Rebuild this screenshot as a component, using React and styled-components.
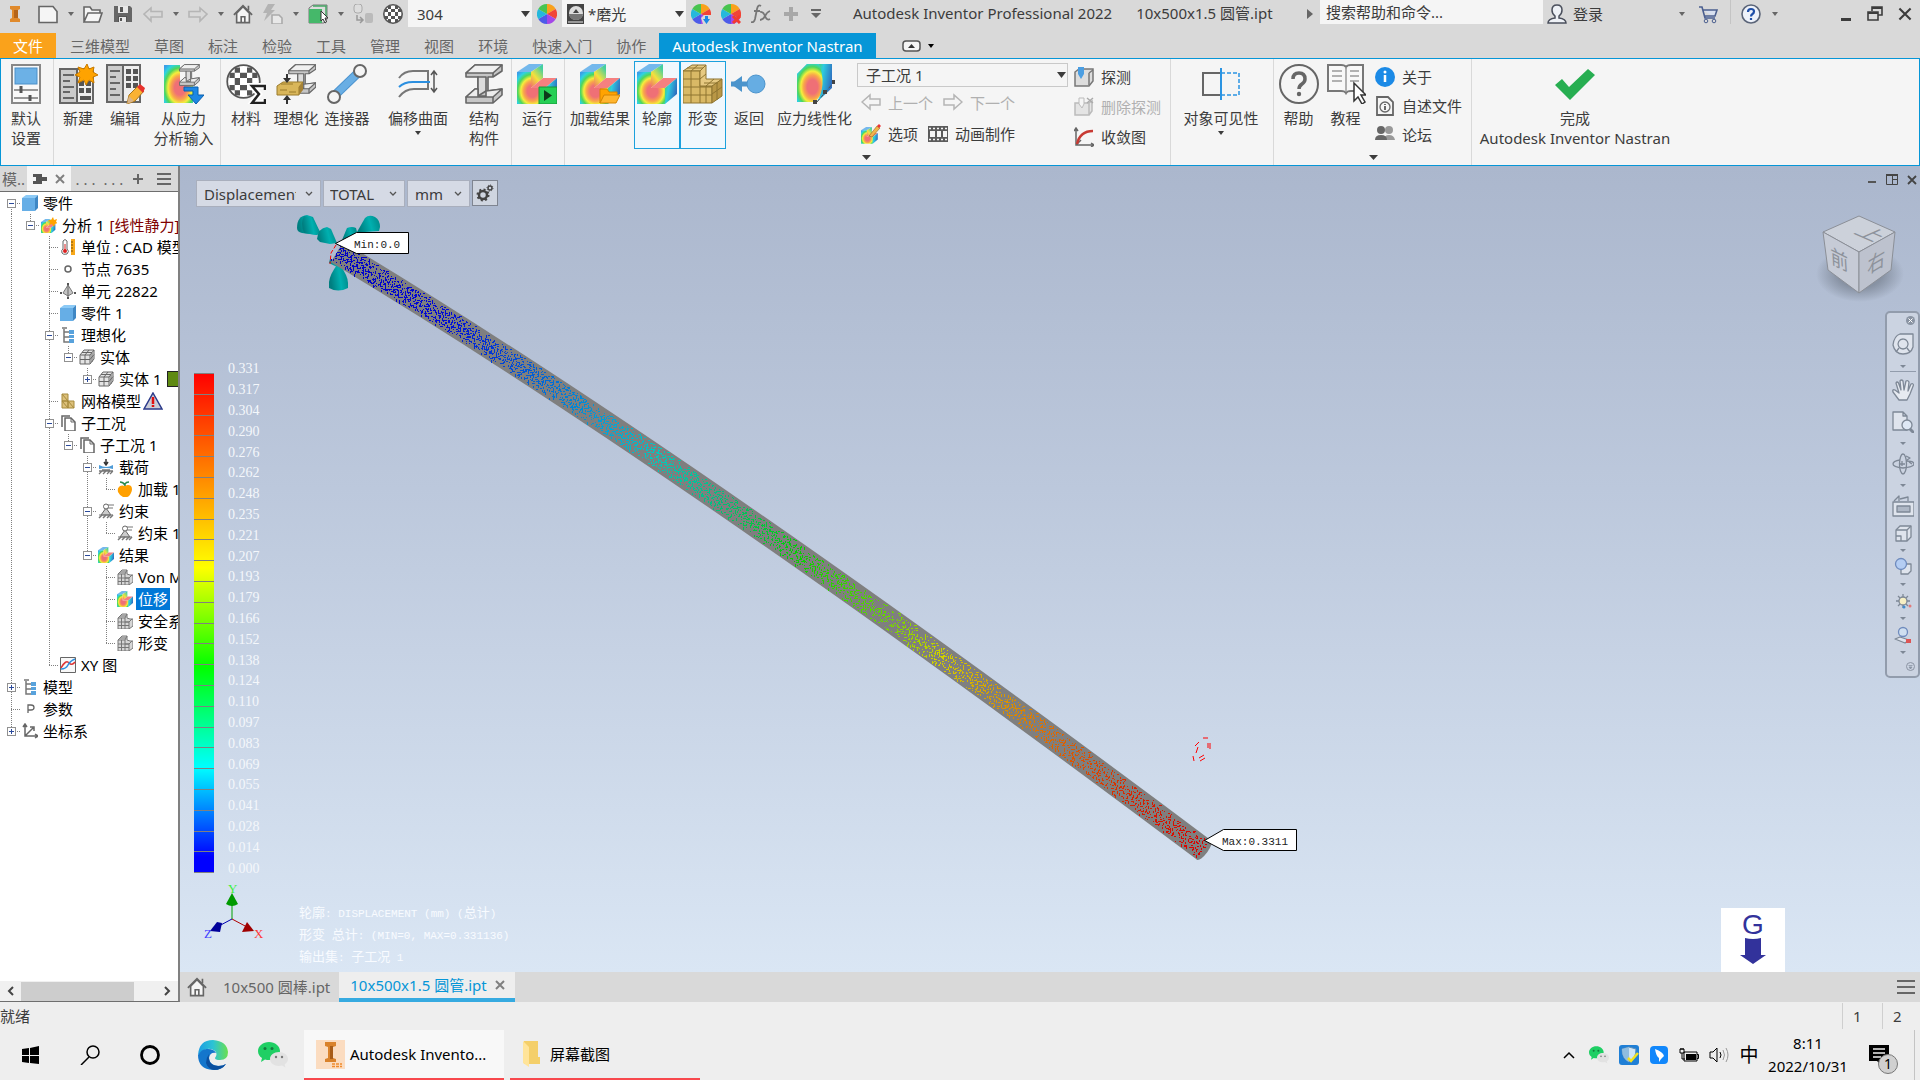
import React, { useState } from 'react'
import styled, { createGlobalStyle, css } from 'styled-components'

const GlobalStyle = createGlobalStyle`
  * {
    box-sizing: border-box;
  }
  body {
    margin: 0;
    background: #eee;
    color: #3c3c3c;
    font-family: 'Noto Sans', 'Noto Sans CJK SC', sans-serif;
    font-size: 15px;
    line-height: 20px;
    overflow: hidden;
  }
  button, select, input {
    margin: 0;
    padding: 0;
    border: 0;
    border-radius: 0;
    background: none;
    color: inherit;
    font: inherit;
    outline: none;
  }
  svg {
    display: block;
    flex: none;
  }
`

/* ---------- layout ---------- */

const Window = styled.div`
  display: flex;
  flex-direction: column;
  height: 100vh;
  white-space: nowrap;
`
const TitleBar = styled.header`
  display: flex;
  height: 33px;
  background: #d9d9d9;
`
const ToolButton = styled.button`
  display: flex;
  align-items: center;
  justify-content: center;
  width: ${(p) => p.$w || 30}px;
  height: 27px;
`
const TitleText = styled.div`
  display: flex;
  gap: 24px;
  margin-left: 27px;
  line-height: 27px;
`
const RightTools = styled.div`
  display: flex;
  margin-left: auto;
`
const SearchInput = styled.input`
  width: 223px;
  height: 24px;
  padding: 0 6px;
  background: #f5f5f5;
  &::placeholder {
    color: #3c3c3c;
    opacity: 1;
  }
`
const LoginButton = styled.button`
  display: flex;
  align-items: center;
  gap: 6px;
  width: 135px;
  height: 27px;
  padding-left: 4px;
`
const Rule = styled.span`
  width: 1px;
  height: ${(p) => p.$h}px;
  background: #c4c4c4;
`
const WindowButtons = styled.div`
  display: flex;
  margin-left: 53px;
`

/* drop-down: the select and its arrow share one grid cell */
const SelectBox = styled.div`
  display: grid;
  align-items: center;
  width: ${(p) => p.$w}px;
  height: 27px;
  > * {
    grid-area: 1 / 1;
  }
  > svg {
    pointer-events: none;
  }
  > svg:last-child {
    justify-self: end;
    margin-right: ${(p) => (p.$kind === 'view' ? 8 : 2)}px;
  }
  select {
    appearance: none;
    width: 100%;
    height: 100%;
    padding: 0 24px 0 ${(p) => p.$pad || 9}px;
    ${(p) =>
      p.$kind === 'ribbon'
        ? css`
            border: 1px solid #c9c9c9;
            background: #f5f5f5;
          `
        : p.$kind === 'view'
          ? css`
              border: 1px solid #a9afbd;
              background: #d5dae5;
            `
          : css`
              background: #f5f5f5;
            `}
  }
`

const RibbonTabs = styled.nav`
  display: flex;
  height: 25px;
  background: #d9d9d9;
`
const RibbonTab = styled.button`
  padding: 0 ${(p) => (p.$file || p.$active ? 13 : 12)}px;
  color: #666;
  margin-right: ${(p) => (p.$file ? 2 : 0)}px;
  ${(p) => p.$file && 'background: #faa21b; color: #fff;'}
  ${(p) => p.$active && 'margin-left: 1px; background: #0696d7; color: #fff;'}
`
const PanelToggle = styled.button`
  display: flex;
  align-items: center;
  gap: 7px;
  margin-left: 26px;
`

const Ribbon = styled.div`
  display: flex;
  height: 108px;
  border: 1px solid #0696d7;
  background: #f5f5f5;
`
const RibbonGroup = styled.section`
  display: flex;
  width: ${(p) => p.$w}px;
  padding: 2px 0 0 ${(p) => p.$pad || 0}px;
  border-right: ${(p) => (p.$w ? '1px solid #d9d9d9' : '0')};
`
const BigButton = styled.button`
  display: flex;
  flex-direction: column;
  align-items: center;
  gap: 4px;
  width: ${(p) => p.$w}px;
  height: 88px;
  padding-top: 2px;
  border: 1px solid transparent;
  & + & {
    margin-left: ${(p) => (p.$on ? 1 : 0)}px;
  }
  ${(p) => p.$on && 'border-color: #1ba1dd; background: #f0f8fd;'}
`
const BigLabel = styled.span`
  display: flex;
  flex-direction: column;
  align-items: center;
  svg {
    margin-top: 3px;
  }
`
const SmallButton = styled.button`
  display: flex;
  align-items: center;
  gap: 7px;
  height: 30px;
  &:disabled {
    color: #b0b0b0;
  }
`
const SmallRow = styled.div`
  display: flex;
  align-items: center;
  gap: 10px;
  padding-left: 4px;
`
const Column = styled.div`
  display: flex;
  flex-direction: column;
  padding-top: 1px;
  > ${SmallButton} {
    margin-left: 6px;
  }
`
const SelectColumn = styled.div`
  display: flex;
  flex-direction: column;
  gap: 1px;
  padding-top: 2px;
`
const MoreButton = styled.button`
  align-self: flex-start;
  padding: 5px;
  padding-left: ${(p) => p.$pad || 0}px;
`

const Main = styled.main`
  display: flex;
  flex: 1;
  min-height: 0;
`
const Browser = styled.aside`
  display: flex;
  flex-direction: column;
  width: 180px;
  border-right: 2px solid #808080;
  border-bottom: 1px solid #6e6e6e;
  background: #fff;
`
const BrowserTabs = styled.div`
  display: flex;
  align-items: center;
  height: 26px;
  border-bottom: 1px solid #6e6e6e;
  background: #d9d9d9;
  color: #666;
`
const BrowserTab = styled.button`
  display: flex;
  align-items: center;
  justify-content: center;
  gap: 8px;
  width: ${(p) => p.$w}px;
  height: 25px;
  background: ${(p) => (p.$on ? '#f5f5f5' : 'none')};
`
const Tree = styled.ul`
  flex: 1;
  margin: 0;
  padding: 0 0 0 2px;
  overflow: hidden;
  list-style: none;
  color: #000;
`
const TreeRow = styled.li`
  display: flex;
  align-items: center;
  height: 22px;
`
const dots = (dir) =>
  `repeating-linear-gradient(${dir}, #808080 0 1px, transparent 1px 2px)`
const Guide = styled.span`
  display: flex;
  align-items: center;
  flex: none;
  width: 19px;
  height: 22px;
  padding-left: 5px;
  background-repeat: no-repeat;
  ${(p) =>
    p.$own
      ? css`
          background-image: ${dots('to bottom')}, ${dots('to right')};
          background-position: 9px ${p.$own === 'first' ? 11 : 0}px, 9px 11px;
          background-size: 1px ${p.$own === 'mid' ? 22 : 11}px, 10px 1px;
        `
      : p.$line &&
        css`
          background-image: ${dots('to bottom')};
          background-position: 9px 0;
          background-size: 1px 22px;
        `}
`
const Expander = styled.button`
  display: flex;
  align-items: center;
  justify-content: center;
  width: 9px;
  height: 9px;
  border: 1px solid #919191;
  background: #fff;
`
const TreeIcon = styled.span`
  flex: none;
  width: 18px;
  padding-left: 1px;
`
const TreeLabel = styled.span`
  padding: 0 2px;
  line-height: 22px;
  margin-left: 2px;
  ${(p) => p.$selected && 'background: #0078d7; color: #fff;'}
`
const Kind = styled.span`
  margin-left: 3px;
  color: #800000;
`
const Swatch = styled.span`
  flex: none;
  width: 18px;
  height: 16px;
  margin-left: 4px;
  border: 1px solid #222;
  background: #5f8a12;
`
const ScrollBar = styled.div`
  display: flex;
  align-items: center;
  height: 20px;
  background: #f0f0f0;
  button {
    display: flex;
    justify-content: center;
    width: 21px;
  }
`
const ScrollThumb = styled.div`
  width: 113px;
  height: 19px;
  margin-right: auto;
  background: #cdcdcd;
`

const Documents = styled.section`
  display: flex;
  flex: 1;
  flex-direction: column;
  min-width: 0;
`
const Viewport = styled.div`
  position: relative;
  display: flex;
  flex: 1;
  flex-direction: column;
  padding: 14px 0 0 16px;
  overflow: hidden;
  background: linear-gradient(#abb7cd, #bcc8dc 40%, #dae6f4);
`
const Model = styled.svg`
  position: absolute;
  left: 0;
  top: 0;
`
const ViewBar = styled.div`
  position: relative;
  display: flex;
  gap: 2px;
`
const GearButton = styled.button`
  display: flex;
  align-items: center;
  justify-content: center;
  width: 26px;
  height: 26px;
  border: 1px solid #7f8591;
  background: #cfd5e0;
`
const ViewWindowButtons = styled.div`
  position: absolute;
  top: 0;
  right: 0;
  display: flex;
`
const Legend = styled.div`
  display: flex;
  gap: 14px;
  margin-top: 152px;
  height: 520px;
`
const LegendBar = styled.div`
  display: flex;
  flex-direction: column;
  width: 20px;
  height: 500px;
  margin: 14px 0 0 -2px;
  border-bottom: 1px solid #808080;
  background: linear-gradient(
    #f00,
    #ff0 39%,
    #0f0 59%,
    #0ff 79%,
    #00f 97%
  );
`
const LegendStep = styled.span`
  flex: 1;
  border-top: 1px solid #808080;
`
const LegendLabels = styled.div`
  display: flex;
  flex-direction: column;
  color: #f4f7fb;
  font: 14px 'Liberation Serif', serif;
  span {
    display: flex;
    flex: 1;
    align-items: center;
  }
`
const Footer = styled.div`
  display: flex;
  gap: 35px;
  padding: 2px 0 0 8px;
`
const Notes = styled.div`
  padding-top: 20px;
  color: #f8fbff;
  font-size: 13px;
  line-height: 22px;
  p {
    margin: 0;
  }
  code {
    font: 11px 'Liberation Mono', monospace;
  }
`
const ViewCube = styled.svg`
  position: absolute;
  top: 44px;
  right: 14px;
`
const NavBar = styled.div`
  position: absolute;
  top: 145px;
  right: 0;
  display: flex;
  flex-direction: column;
  align-items: center;
  width: 35px;
  border: 2px solid #929cac;
  border-radius: 5px;
  background: #cbd3e1;
`
const NavButton = styled.button`
  display: flex;
  align-items: center;
  justify-content: center;
  width: 30px;
  height: ${(p) => p.$h}px;
`
const NavEnd = styled(NavButton)`
  justify-content: flex-end;
  padding-right: 3px;
`
const NavRule = styled.span`
  width: 26px;
  height: 1px;
  background: #929cac;
`
const Gravity = styled.div`
  position: absolute;
  right: 135px;
  bottom: 0;
  display: flex;
  flex-direction: column;
  align-items: center;
  width: 64px;
  height: 64px;
  padding-top: 4px;
  background: #fff;
  color: #32329b;
  font: 28px/26px 'Liberation Sans', sans-serif;
`

const DocTabs = styled.div`
  display: flex;
  height: 30px;
  background: #d9d9d9;
  color: #666;
`
const DocTab = styled.button`
  display: flex;
  align-items: center;
  gap: 8px;
  height: 30px;
  padding: 0 ${(p) => (p.$home ? 7 : 9)}px;
  ${(p) =>
    p.$on &&
    css`
      padding: 0 10px 0 11px;
      border-bottom: 4px solid #36aae0;
      background: #eee;
      color: #0696d7;
    `}
`
const DocMenu = styled.button`
  margin-left: auto;
  padding: 0 5px;
`

const StatusBar = styled.div`
  display: flex;
  align-items: center;
  height: 28px;
  background: #eee;
  span:first-child {
    margin-right: auto;
  }
`
const StatusCell = styled.span`
  width: ${(p) => p.$w}px;
  height: 26px;
  padding: 3px 0 0 10px;
  border-left: 1px solid #cfcfcf;
`

const TaskBar = styled.footer`
  display: flex;
  align-items: center;
  height: 50px;
  padding-right: 5px;
  background: #eee;
  color: #000;
`
const TaskIcon = styled.button`
  display: flex;
  align-items: center;
  justify-content: center;
  width: ${(p) => p.$w || 60}px;
  height: 50px;
`
const TaskWindow = styled.button`
  display: flex;
  align-items: center;
  gap: ${(p) => (p.$on ? 5 : 8)}px;
  width: ${(p) => (p.$on ? 200 : 190)}px;
  height: 50px;
  margin-left: ${(p) => (p.$on ? 4 : 6)}px;
  padding-left: 12px;
  border-bottom: 2px solid #f8484d;
  background: ${(p) => (p.$on ? '#f8f8f8' : 'none')};
`
const Tray = styled.div`
  display: flex;
  align-items: center;
  height: 50px;
  margin-left: auto;
`
const TrayButton = styled.button`
  display: flex;
  align-items: center;
  justify-content: center;
  width: 30px;
  height: 50px;
  font-size: ${(p) => (p.$ime ? 19 : 15)}px;
`
const Clock = styled.button`
  width: 88px;
  line-height: 23px;
`
const NoticeButton = styled.button`
  position: relative;
  width: 62px;
  height: 50px;
  padding-left: 17px;
`
const NoticeCount = styled.span`
  position: absolute;
  left: 26px;
  top: 24px;
  width: 20px;
  height: 20px;
  border: 1px solid #777;
  border-radius: 50%;
  background: #d0d0d0;
  font-size: 14px;
  line-height: 18px;
`

/* ---------- icons ---------- */

const Svg = ({ s = 20, h, box, children, ...rest }) => (
  <svg
    width={s}
    height={h || s}
    viewBox={box || `0 0 ${s} ${h || s}`}
    fill="none"
    aria-hidden="true"
    {...rest}
  >
    {children}
  </svg>
)

const Down = ({ w = 8, h = 5, color = '#3c3c3c' }) => (
  <Svg s={w} h={h}>
    <path d={`M0 0h${w}l-${w / 2} ${h}z`} fill={color} />
  </Svg>
)
const Chevron = () => (
  <Svg s={8} h={6}>
    <path d="M1 1l3 3 3-3" stroke="#555" strokeWidth="1.3" />
  </Svg>
)
const Cross = ({ s = 10, color = '#808080', w = 2 }) => (
  <Svg s={s} box="0 0 10 10">
    <path d="M1 1l8 8M9 1l-8 8" stroke={color} strokeWidth={w} />
  </Svg>
)
const Menu = ({ w = 14, gap = 5 }) => (
  <Svg s={w} h={gap * 2 + 2}>
    <path
      d={`M0 1h${w}M0 ${gap + 1}h${w}M0 ${gap * 2 + 1}h${w}`}
      stroke="#666"
      strokeWidth="2"
    />
  </Svg>
)

/* stress-coloured solid used by many commands, drawn on a 40 grid */
const contourShape = (
  <g>
    <path d="M0 8L12 0h14L14 8z" fill="#74b8ec" />
    <path d="M0 8h14v16h14v16H0z" fill="url(#heat)" />
    <path d="M14 8L26 0v14L14 24z" fill="url(#heatSide)" />
    <path d="M14 24l12-10h14L28 24z" fill="#f58080" />
    <path d="M28 24l12-10v16L28 40z" fill="url(#heatEnd)" />
  </g>
)
const beamShape = (
  <g stroke="#666" strokeWidth="1.6" strokeLinejoin="round">
    <path d="M10 1h27v6l-9 6h-5v14l14-2v6l-9 8H1v-6l9-8h3V13H1V9z" fill="#c6c6c6" />
    <path d="M10 1h27l-9 8H1z" fill="#f0f0f0" />
    <path d="M13 13h8v14l-8 5z" fill="#dcdcdc" />
    <path d="M1 33l9-8h3v7h8v-5l16-2-9 8z" fill="#ececec" />
    <path d="M28 9v4M28 33v6" />
  </g>
)
const grid = (x, y, n, m, s, g, fill) =>
  Array.from({ length: n * m }, (_, i) => (
    <rect
      key={i}
      x={x + (i % n) * g}
      y={y + Math.floor(i / n) * g}
      width={s}
      height={s}
      fill={fill}
    />
  ))

const Wheel = ({ mark }) => (
  <Svg s={20}>
    <path d="M10 10L10 0A10 10 0 0 1 18.7 5z" fill="#f9a11b" />
    <path d="M10 10L18.7 5A10 10 0 0 1 18.7 15z" fill="#f14436" />
    <path d="M10 10L18.7 15A10 10 0 0 1 10 20z" fill="#a447e8" />
    <path d="M10 10L10 20A10 10 0 0 1 1.3 15z" fill="#4d5be8" />
    <path d="M10 10L1.3 15A10 10 0 0 1 1.3 5z" fill="#25b8dc" />
    <path d="M10 10L1.3 5A10 10 0 0 1 10 0z" fill="#47c44f" />
    {mark === 'add' && (
      <>
        <path d="M10 14l3-3h7v9h-8z" fill="#d9d9d9" />
        <path d="M14 12h3v4h-3zM12 15h7l-3.500 5z" fill="#1b87e5" />
      </>
    )}
    {mark === 'del' && (
      <path d="M12 12l7 7M19 12l-7 7" stroke="#f23a2f" strokeWidth="3" />
    )}
  </Svg>
)
const checks =
  'M5 2h3v3H5zM12 2h3v3h-3zM8 5h4v3H8zM15 5h3v3h-3zM2 5h3v3H2zM5 8h3v4H5zM12 8h3v4h-3zM8 12h4v3H8zM2 12h3v3H2zM15 12h3v3h-3zM5 15h3v3H5zM12 15h3v3h-3z'
const Checker = () => (
  <Svg s={20}>
    <circle cx="10" cy="10" r="9.200" fill="#fff" stroke="#555" strokeWidth="1.600" />
    <path d={checks} fill="#555" />
  </Svg>
)
const Home = ({ s = 22 }) => (
  <Svg s={s} box="0 0 22 22">
    <path d="M4 10v10.500h14V10L11 3z" fill="#f5f5f5" stroke="#666" strokeWidth="1.800" />
    <path d="M1 12L11 2l10 10" stroke="#666" strokeWidth="2" />
    <path d="M9 20v-6h4v6M17 2v5" stroke="#666" strokeWidth="1.800" />
  </Svg>
)
const WeChat = ({ s = 30 }) => (
  <Svg s={s} box="0 0 30 30">
    <path
      d="M11 2C5 2 0 6 0 11c0 3 1.500 5.500 4 7l-1 4 4-2.500c1.300.4 2.600.5 4 .5 6 0 11-4 11-9S17 2 11 2z"
      fill="#1fcf64"
    />
    <circle cx="7" cy="8.500" r="1.500" fill="#157a3e" />
    <circle cx="14" cy="8.500" r="1.500" fill="#157a3e" />
    <path
      d="M21 12c-5 0-9 3-9 7s4 7 9 7c1 0 2-.1 3-.4l3.500 2-.8-3.200c2-1.300 3.300-3.200 3.300-5.400 0-4-4-7-9-7z"
      fill="#e2e2e2"
    />
    <circle cx="18" cy="17" r="1.200" fill="#777" />
    <circle cx="24" cy="17" r="1.200" fill="#777" />
  </Svg>
)

const qat = {
  file: <path d="M1 2.500h14l4 5v11H1z" fill="#f5f5f5" stroke="#666" strokeWidth="1.600" />,
  open: (
    <path
      d="M1 18V3h6l2 3h8v3M1 18L5 9h14l-3 9z"
      fill="#f5f5f5"
      stroke="#666"
      strokeWidth="1.600"
    />
  ),
  save: (
    <>
      <path d="M1 2h16l2 2v14H1z" fill="#666" />
      <path d="M5 2h10v7H5z" fill="#e8e8e8" />
      <path d="M7 3h3v5H7zM5 12h9v6H5z" fill="#555" />
      <path d="M6 13h7v5H6z" fill="#e8e8e8" />
      <path d="M7 14h2v3H7z" fill="#555" />
    </>
  ),
  undo: <path d="M1 10l7-6v3.500h11V13H8v4z" stroke="#b5b5b5" strokeWidth="1.600" />,
  redo: <path d="M19 10l-7-6v3.500H1V13h11v4z" stroke="#b5b5b5" strokeWidth="1.600" />,
  bolt: (
    <>
      <path d="M5 0h7L8 6h4L1 17l3-8H0z" fill="#b3b3b3" />
      <path d="M9 11h7l3 3v6H9z" fill="#e8e8e8" stroke="#aaa" strokeWidth="1.600" />
    </>
  ),
  cube: (
    <>
      <path d="M1 4l4-3h14v14l-3 4H1z" fill="#ddd" stroke="#777" />
      <path d="M1 5h13v14H1z" fill="#45b86a" />
      <path d="M5 2h13v12" stroke="#45a565" strokeWidth="1.500" />
      <path d="M13 7v10l2-2 2 4 1.500-1-1.500-4h3z" fill="#fff" stroke="#333" />
    </>
  ),
  swap: (
    <>
      <rect x="1" y="0" width="8" height="9" rx="3" fill="#ddd" stroke="#aaa" />
      <rect x="12" y="9" width="8" height="10" rx="2" fill="#bbb" />
      <path d="M4 11v5h5M7 13l3 3-3 3" stroke="#999" strokeWidth="1.500" />
    </>
  ),
}

const big = {
  settings: (
    <>
      <rect x="6" y="1" width="28" height="38" fill="#f8f8f8" stroke="#888" strokeWidth="2" />
      <rect x="9" y="4" width="22" height="16" fill="#6cb1e6" stroke="#4b8fc8" />
      <path d="M8 26h24M8 34h24" stroke="#777" strokeWidth="1.500" />
      <path d="M15 22v7M24 31v6" stroke="#555" strokeWidth="3" />
    </>
  ),
  create: (
    <>
      <path d="M2 5h17v34H2z" fill="#ccc" stroke="#666" strokeWidth="2" />
      <path d="M19 5h16v34H19z" fill="#eee" stroke="#666" strokeWidth="2" />
      <path d="M5 11h11M5 17h7M5 23h11M5 28h7M5 34h11" stroke="#666" strokeWidth="2" />
      {grid(21, 17, 2, 2, 5, 7, '#555')}
      <path d="M22 32h11v4H22z" fill="#555" />
      <path
        d="M29 0l2 5 5-2-1 5 5 3-5 2 1 6-5-3-3 5-2-5-6 3 2-6-5-2 5-3-2-5 6 2z"
        fill="#ffa300"
        stroke="#c87b00"
      />
    </>
  ),
  edit: (
    <>
      <path d="M2 1h16v37H2z" fill="#ccc" stroke="#666" strokeWidth="2" />
      <path d="M18 1h17v37H18z" fill="#eee" stroke="#666" strokeWidth="2" />
      <path d="M5 7h10M5 13h6M5 19h10M5 25h6M5 31h10" stroke="#666" strokeWidth="2" />
      {grid(21, 5, 2, 3, 5, 7, '#555')}
      <path d="M22 40l2-9 9-9 6 5-9 10z" fill="#f9b233" stroke="#a8761a" />
      <path d="M32 23l3-3 5 4-2 5z" fill="#e8322c" />
      <path d="M22 40l2-8 5 5z" fill="#d8b48a" />
    </>
  ),
  stress: (
    <>
      <path d="M0 1h16v16h13v22H0z" fill="url(#heat)" />
      <g transform="translate(15 0) scale(.55)">{beamShape}</g>
      <path d="M20 23h14v8h6l-8 9-8-9h5v-4h-9z" fill="#1d87e4" stroke="#0b60ad" />
    </>
  ),
  sigma: (
    <>
      <g transform="scale(1.750)">
        <circle cx="10" cy="10" r="9.300" fill="#fff" stroke="#555" />
        <path d={checks} fill="#555" />
      </g>
      <path d="M39 25v-3H26l7 8-7 9h13v-4" stroke="#fff" strokeWidth="6" />
      <path d="M39 26v-4H26l7 8-7 9h13v-4" stroke="#222" strokeWidth="2.500" />
    </>
  ),
  ideal: (
    <>
      <g transform="translate(12 0) scale(.75)">{beamShape}</g>
      <path d="M1 22l6-4h20l-4 5v8H1z" fill="#d9b65a" stroke="#9a7a2a" />
      <path d="M23 23l4-5v8l-4 5z" fill="#a58235" />
      <path d="M4 26h7M13 28h7M5 20h12" stroke="#9a7a2a" />
      <path d="M11 10v8M11 40v-7" stroke="#333" strokeWidth="2" />
      <path d="M7 14h8l-4 5zM7 36h8l-4-5z" fill="#333" />
    </>
  ),
  link: (
    <>
      <path d="M7 32L33 7" stroke="#4c94d0" strokeWidth="9" />
      <path d="M7 32L33 7" stroke="#69aee4" strokeWidth="7" />
      <circle cx="7" cy="33" r="6" fill="#f5f5f5" stroke="#666" strokeWidth="2" />
      <circle cx="33" cy="7" r="6" fill="#f5f5f5" stroke="#666" strokeWidth="2" />
    </>
  ),
  offset: (
    <>
      <path d="M1 14q5-7 14-7h15v18H16q-9 0-15 8" stroke="#777" strokeWidth="2" />
      <path d="M1 23q5-5 14-5h17" stroke="#2b8fe0" strokeWidth="2" />
      <path d="M36 8v19M33 11l3-4 3 4M33 24l3 4 3-4" stroke="#555" strokeWidth="1.500" />
    </>
  ),
  member: <g transform="translate(1 0)">{beamShape}</g>,
  run: (
    <>
      {contourShape}
      <path d="M22 23h18v17H22z" fill="#26cf55" stroke="#18943a" />
      <path d="M27 26v11l8-5.500z" fill="#0d3a1a" />
    </>
  ),
  load: (
    <>
      {contourShape}
      <path d="M20 39V25h7l2 3h8v4H24z" fill="#ffa300" stroke="#d48400" />
      <path d="M20 39l4-8h16l-4 8z" fill="#ffb52e" stroke="#d48400" />
    </>
  ),
  contour: contourShape,
  deform: (
    <g stroke="#8e7430" strokeWidth="1">
      <path d="M0 7L9 1h14l-6 6z" fill="#e6c981" />
      <path d="M0 7h17v15h12v17H0z" fill="#d9b966" />
      <path d="M17 7l6-6v14h16l-9 7H17z" fill="#e6c981" />
      <path d="M29 22l10-7v17l-10 7z" fill="#b99746" />
      <path d="M0 15h17M0 23h29M0 31h29M8 7v32M17 22v17M23 22v17M4 4h16M17 15l6-5M8 7l7-6M29 30l10-7M34 19v17M21 19h14M23 22l8-7" />
    </g>
  ),
  back: (
    <>
      <path d="M2 20h18" stroke="#4b94cc" strokeWidth="5" />
      <path d="M2 20l11-8v16z" fill="#4b94cc" />
      <circle cx="27" cy="20" r="9" fill="#66ade3" stroke="#4b94cc" />
    </>
  ),
  linear: (
    <>
      <path d="M2 10L12 0h25l-9 10z" fill="#62aee8" />
      <path d="M2 10L12 0h12q14 20-4 38H2z" fill="url(#heat)" />
      <path d="M24 0h13v24L22 38q10-18 2-38z" fill="url(#heatEnd)" />
      <path d="M22 38L39 18" stroke="#555" strokeDasharray="4 2" />
      <path d="M18 36h4v4h-4zM28 26h4v4h-4zM37 16h3v4h-3z" fill="#444" />
    </>
  ),
  visible: (
    <>
      <path d="M20 9H2v22h18" stroke="#666" strokeWidth="2" />
      <path d="M20 9h18v22H20" stroke="#2b94e2" strokeWidth="1.500" strokeDasharray="4 2" />
      <path d="M20 4v32" stroke="#2b94e2" strokeWidth="2" />
    </>
  ),
  help: (
    <>
      <circle cx="20" cy="20" r="19" stroke="#666" strokeWidth="2" />
      <path
        d="M14 15q0-6 6-6t6 6q0 3-3 5-3 2-3 5"
        stroke="#666"
        strokeWidth="3.500"
      />
      <circle cx="20" cy="30" r="2.200" fill="#666" />
    </>
  ),
  tutor: (
    <>
      <path d="M2 1h13q4 0 5 2 1-2 5-2h12v26H25q-4 0-5 2-1-2-5-2H2z" fill="#f8f8f8" stroke="#777" strokeWidth="2" />
      <path d="M20 3v25M6 7h10M6 12h10M6 17h10M24 7h9M24 12h9M24 17h9" stroke="#999" strokeWidth="1.500" />
      <path d="M28 19v18l4-4 4 7 3-2-4-7h5z" fill="#fff" stroke="#333" strokeWidth="1.500" />
    </>
  ),
  finish: <path d="M0 21l7-6 7 8L33 5l7 6-25 25z" fill="#27ae51" />,
}
const BigIcon = ({ name }) => <Svg s={40}>{big[name]}</Svg>

const small = {
  prev: <path d="M1 9l8-7v4h10v6H9v4z" stroke="#b5b5b5" strokeWidth="1.500" />,
  next: <path d="M19 9l-8-7v4H1v6h10v4z" stroke="#b5b5b5" strokeWidth="1.500" />,
  option: (
    <>
      <g transform="translate(0 3) scale(.42)">{contourShape}</g>
      <path d="M8 12l8-10 3 2-8 9z" fill="#f2b44a" stroke="#946a1d" strokeWidth=".6" />
      <path d="M16 2l2-2 2 2-2 2z" fill="#e33" />
    </>
  ),
  film: (
    <>
      <path d="M0 2h20v16H0z" fill="#5b5b5b" />
      <path d="M2 7h5v6H2zM9 7h4v6H9zM15 7h4v6h-4z" fill="#f5f5f5" />
      <path d="M1 4.500h19M1 15.500h19" stroke="#f5f5f5" strokeWidth="1.500" strokeDasharray="2 2" />
    </>
  ),
  probe: (
    <>
      <path d="M1 5l4-3h14v12l-4 5H1z" fill="#ddd" stroke="#777" strokeWidth="1.500" />
      <path d="M15 6v12M15 6l4-3" stroke="#777" strokeWidth="1.500" />
      <path d="M4 0h6v7l-3 5-3-5z" fill="#4b9ee2" />
    </>
  ),
  unprobe: (
    <>
      <path d="M1 6h14v12H1zM15 6l3-2v10l-3 4" fill="#e4e4e4" stroke="#bbb" strokeWidth="1.500" />
      <path d="M5 1h5v6l-2 4-3-4z" fill="#f5f5f5" stroke="#bbb" />
      <path d="M13 1l6 5M19 1l-6 5" stroke="#aaa" strokeWidth="1.500" />
    </>
  ),
  converge: (
    <>
      <path d="M2 1v17h18M0 4l2-3 2 3M17 16l3 2-3 2M2 18l5-5" stroke="#666" strokeWidth="1.500" />
      <path d="M3 17Q6 4 19 4" stroke="#c83a33" strokeWidth="2.500" />
    </>
  ),
  about: (
    <>
      <circle cx="10" cy="10" r="10" fill="#1b8ae6" />
      <path d="M10 8v7" stroke="#fff" strokeWidth="2.500" />
      <circle cx="10" cy="5" r="1.500" fill="#fff" />
    </>
  ),
  readme: (
    <>
      <path d="M2 1h11l5 5v13H2z" fill="#f5f5f5" stroke="#666" strokeWidth="1.800" />
      <circle cx="10" cy="11" r="5" stroke="#666" strokeWidth="1.300" />
      <path d="M10 10v4M10 8v1" stroke="#444" strokeWidth="1.600" />
    </>
  ),
  forum: (
    <>
      <circle cx="14" cy="5" r="4" fill="#999" />
      <path d="M9 15q0-5 5-5t6 5z" fill="#999" />
      <circle cx="6" cy="5" r="4" fill="#666" />
      <path d="M0 15q0-5 6-5t6 5z" fill="#666" />
    </>
  ),
}
const SmallIcon = ({ name }) => <Svg s={20}>{small[name]}</Svg>

const treeIcons = {
  part: (
    <>
      <path d="M0 3l4-3h12l-3 3z" fill="#8ccaf6" />
      <path d="M0 3h13v13H0z" fill="#66aee6" />
      <path d="M13 3l3-3v13l-3 3z" fill="#3f87c4" />
    </>
  ),
  analysis: (
    <>
      <g transform="translate(0 2) scale(.36)">{contourShape}</g>
      <path d="M12 0l1 3 3-1-1 3 2 1-3 1-1 3-2-3-3 1 1-3-2-2 3 0z" fill="#ffa300" />
    </>
  ),
  unit: (
    <>
      <path d="M3 10V2q2-3 4 0v8q3 2 0 5-4 1-5-1-1-3 1-4z" fill="#fff" stroke="#666" />
      <circle cx="5" cy="12" r="2" fill="#d22" />
      <path d="M5 5v7" stroke="#d22" />
      <path d="M11 0h4v16h-4z" fill="#f7a81b" />
      <path d="M11 3h2M11 6h2M11 9h2M11 12h2" stroke="#7a4d00" />
    </>
  ),
  node: <circle cx="8" cy="8" r="3" stroke="#666" strokeWidth="1.500" />,
  element: (
    <>
      <path d="M8 2L3 10l5 3 5-3z" fill="#c4c4c4" stroke="#777" />
      <path d="M8 1v14" stroke="#666" />
      <path d="M7 0h2v2H7zM7 14h2v2H7zM0 9h2v2H0zM14 9h2v2h-2z" fill="#555" />
    </>
  ),
  model: (
    <>
      <path d="M2 1h5M4 2v13h5M4 5h5M4 10h5" stroke="#777" strokeWidth="1.500" />
      <path d="M9 3h5v4H9zM9 8h5v3H9zM9 12h5v4H9z" fill="#58a2dc" />
    </>
  ),
  solid: (
    <g fill="#e4e4e4" stroke="#666">
      <path d="M1 6l4-5h10v9l-4 5H1z" />
      <path d="M1 6h10v9M11 6l4-5M6 6v9M1 10.500h10l4-5M6 6l4-5M13 4v9M3 3.500h10" />
    </g>
  ),
  mesh: (
    <g fill="#dcc07a" stroke="#a68a3c">
      <path d="M2 1h6v7H2zM2 8h6v7H2zM8 8h6v7H8z" />
      <path d="M2 1l6 7M2 8l6 7M8 8l6 7" />
    </g>
  ),
  cases: (
    <>
      <path d="M10 1H2v11" stroke="#666" strokeWidth="1.500" />
      <path d="M5 3h6l4 4v9H5z" fill="#fff" stroke="#666" strokeWidth="1.500" />
      <path d="M11 3v4h4" stroke="#666" />
    </>
  ),
  loads: (
    <>
      <path d="M1 6q7 4 14 0v4q-7-2-14 0z" fill="#4f9cd8" />
      <path d="M8 0v5M6 3l2 3 2-3" stroke="#333" strokeWidth="1.500" />
      <path d="M4 11h8M1 12h14M1 15l3-3M5 15l3-3M9 15l3-3M12 15l3-3" stroke="#777" strokeWidth="1.300" />
    </>
  ),
  apple: (
    <>
      <path d="M8 5q3-2 6 0 2 3 0 7-2 4-4 4H6q-3-1-5-5-1-4 2-6 2-1 5 0z" fill="#ffa000" />
      <path d="M8 5V2M3 1q3 0 5 3M8 3q1-2 4-2" stroke="#2a8a4c" strokeWidth="1.500" />
    </>
  ),
  fixed: (
    <>
      <path d="M3 12l5-7 5 7z" fill="#ccc" stroke="#666" />
      <circle cx="8" cy="3.500" r="2.500" fill="#fff" stroke="#666" />
      <path d="M10 2h6M10 5h5M1 12h14" stroke="#777" />
      <path d="M1 15l3-3M5 15l3-3M9 15l3-3M12 15l3-3" stroke="#777" strokeWidth="1.500" />
    </>
  ),
  result: <g transform="scale(.4)">{contourShape}</g>,
  grid: (
    <g stroke="#777" strokeWidth="1">
      <path d="M1 5l4-4h5v4l3 1h3v7l-4 3H1z" fill="#d6d6d6" />
      <path d="M1 5h7v4h4v7M4.500 5v11M8 9v7M1 9h11M1 12.500h11M8 5l2-4M12 9l3-3M3 3h6" />
    </g>
  ),
  xy: (
    <>
      <path d="M.5.5h15v15H.5z" fill="#f8f8f8" stroke="#666" />
      <path d="M1 11q5-9 8-5 3 3 6-1" stroke="#d33" strokeWidth="1.500" />
      <path d="M1 12q5 0 7-4t7-6" stroke="#2b8fe0" strokeWidth="1.500" />
    </>
  ),
  axes: (
    <path d="M3 1v12h13M3 13l8-8M1 4l2-3 2 3M13 11l3 2-3 2M8 4h4v4" stroke="#666" strokeWidth="1.500" />
  ),
  param: <path d="M6 12V4h3q3 0 3 2.500t-3 2.500H6" stroke="#666" strokeWidth="1.300" />,
}
const Warning = () => (
  <Svg s={20} h={18}>
    <path d="M10 1l9 16H1z" fill="#c9ccd6" stroke="#2b3a8a" strokeWidth="1.500" />
    <path d="M10 5v7M10 13v2" stroke="#e01010" strokeWidth="2.500" />
  </Svg>
)

const navIcons = {
  wheel: (
    <>
      <path d="M8 1h13v13q-2 7-10 7T1 12Q2 3 8 1z" fill="#dfe4ed" />
      <path d="M11 6a5 5 0 1 0 .1 0M7 15l-3 4M15 15l3 4" />
    </>
  ),
  hand: (
    <path
      d="M7 21L1 13q-1-3 2-2l4 3L4 4q1-2 2.500 0L9 11 8 2q1.500-2 3 0l1 9 2-9q2-1 3 1l-1 9 3-7q2-1 2.500 1L18 15l-3 6z"
      fill="#e6eaf1"
    />
  ),
  zoom: (
    <>
      <path d="M1 1h10l4 4v14H1zM11 1v4h4" fill="#dfe4ed" />
      <circle cx="15" cy="14" r="5" fill="#dfe8f5" />
      <path d="M18 18l4 4" strokeWidth="3" />
    </>
  ),
  orbit: (
    <>
      <ellipse cx="11" cy="11" rx="3.500" ry="10" />
      <path d="M8 7Q1 8 1 11t10 4q11-1 11-4t-8-3M14 3l4 2-3 2M17 9l3 2M10 8v5M8 11h5" />
    </>
  ),
  look: (
    <>
      <path d="M1 7h21v14H1z" fill="#dfe4ed" />
      <path d="M5 11h13v6H5z" fill="#aeb7c5" />
      <path d="M2 6l5-5v5M8 4l8-2v4" />
    </>
  ),
  box: (
    <>
      <path d="M4 8l4-4h11v11l-4 4H4z" fill="#dfe4ed" />
      <path d="M4 8h11v11M15 8l4-4M4 14h5v5" />
    </>
  ),
  ball: (
    <>
      <path d="M9 8h10v7l-3 3H9z" fill="#dfe4ed" />
      <circle cx="9" cy="8" r="5.500" fill="#b4cdf3" stroke="#6f8bbd" />
    </>
  ),
  sun: (
    <>
      <path d="M11 4v14M4 11h14M6 6l10 10M16 6L6 16" />
      <circle cx="11" cy="11" r="4" fill="#f6efc4" />
      <circle cx="12" cy="17" r="1.500" fill="#3f8ccd" stroke="none" />
      <circle cx="18" cy="16" r="1.500" fill="#e27b7b" stroke="none" />
    </>
  ),
  floor: (
    <>
      <path d="M3 15l5-2 9 3-4 3z" fill="#dfe4ed" />
      <circle cx="11" cy="8" r="4.500" fill="#cfdff0" stroke="#6f8bbd" />
      <path d="M14 15h5v4h-5z" fill="#d55" stroke="none" />
    </>
  ),
}
const NavIcon = ({ name }) => (
  <Svg s={22} stroke="#7e8896" strokeWidth="1.300" strokeLinejoin="round">
    {navIcons[name]}
  </Svg>
)
const NavArrow = ({ h }) => (
  <NavButton $h={h} aria-label="more">
    <Down w={6} h={3} color="#7e8896" />
  </NavButton>
)

/* ---------- data ---------- */

const menuTabs = ['三维模型', '草图', '标注', '检验', '工具', '管理', '视图', '环境', '快速入门', '协作']

// guides: "|" line through, "." empty, last letter is the row's own branch
const treeRows = [
  { g: 'f', icon: 'part', text: '零件', open: true },
  { g: '|l', icon: 'analysis', text: '分析 1', kind: '[线性静力]', open: true },
  { g: '|.m', icon: 'unit', text: '单位 : CAD 模型' },
  { g: '|.m', icon: 'node', text: '节点 7635' },
  { g: '|.m', icon: 'element', text: '单元 22822' },
  { g: '|.m', icon: 'part', text: '零件 1' },
  { g: '|.m', icon: 'model', text: '理想化', open: true },
  { g: '|.|l', icon: 'solid', text: '实体', open: true },
  { g: '|.|.l', icon: 'solid', text: '实体 1', open: false, swatch: true },
  { g: '|.m', icon: 'mesh', text: '网格模型', warn: true },
  { g: '|.m', icon: 'cases', text: '子工况', open: true },
  { g: '|.|l', icon: 'cases', text: '子工况 1', open: true },
  { g: '|.|.m', icon: 'loads', text: '载荷', open: true },
  { g: '|.|.|l', icon: 'apple', text: '加载 1' },
  { g: '|.|.m', icon: 'fixed', text: '约束', open: true },
  { g: '|.|.|l', icon: 'fixed', text: '约束 1' },
  { g: '|.|.l', icon: 'result', text: '结果', open: true },
  { g: '|.|..m', icon: 'grid', text: 'Von Mises' },
  { g: '|.|..m', icon: 'result', text: '位移', selected: true },
  { g: '|.|..m', icon: 'grid', text: '安全系数' },
  { g: '|.|..l', icon: 'grid', text: '形变' },
  { g: '|.l', icon: 'xy', text: 'XY 图' },
  { g: 'm', icon: 'model', text: '模型', open: false },
  { g: 'm', icon: 'param', text: '参数' },
  { g: 'l', icon: 'axes', text: '坐标系', open: false },
]
const branch = { f: 'first', m: 'mid', l: 'last' }

const legend = [
  '0.331', '0.317', '0.304', '0.290', '0.276', '0.262', '0.248', '0.235', '0.221',
  '0.207', '0.193', '0.179', '0.166', '0.152', '0.138', '0.124', '0.110', '0.097',
  '0.083', '0.069', '0.055', '0.041', '0.028', '0.014', '0.000',
]

/* ---------- deformed tube ---------- */

// bent centre line of the tube: start, control point, end
const start = [157, 86]
const bend = [505, 295]
const end = [1024, 684]
const tubePath = `M${start}Q${bend} ${end}`

const buildMesh = () => {
  let seed = 7
  const rnd = () => {
    seed = (seed * 16807) % 2147483647
    return seed / 2147483647
  }
  const at = (t, i) =>
    (1 - t) * (1 - t) * start[i] + 2 * t * (1 - t) * bend[i] + t * t * end[i]
  const slope = (t, i) =>
    (1 - t) * (bend[i] - start[i]) + t * (end[i] - bend[i])
  const steps = 400
  let d = ''
  for (let n = 0; n < steps; n++) {
    const t = n / steps
    const sx = slope(t, 0)
    const sy = slope(t, 1)
    const len = Math.hypot(sx, sy)
    for (let k = -9; k <= 9; k += 2) {
      if (rnd() < Math.abs(k) / 22) continue
      const x = at(t, 0) - (sy / len) * k + rnd() * 2 - 1
      const y = at(t, 1) + (sx / len) * k + rnd() * 2 - 1
      const run = rnd() < 0.5
      const size = 1 + Math.round(rnd() * 2)
      d += `M${Math.round(x)} ${Math.round(y)}${run ? 'h' : 'v'}${size}`
    }
  }
  return d
}
const meshPath = buildMesh()

const Scene = () => (
  <Model width="1740" height="805" viewBox="0 0 1740 805" fill="none">
    <defs>
      <radialGradient id="heat" cx=".55" cy=".6" r=".75">
        <stop offset=".25" stopColor="#ef7076" />
        <stop offset=".42" stopColor="#f9a64a" />
        <stop offset=".55" stopColor="#f4ee3c" />
        <stop offset=".7" stopColor="#4fd65a" />
        <stop offset=".85" stopColor="#2ed3e0" />
        <stop offset="1" stopColor="#3b9fe8" />
      </radialGradient>
      <linearGradient id="heatSide" x1="0" y1="1" x2=".6" y2="0">
        <stop offset="0" stopColor="#ee6a6a" />
        <stop offset=".5" stopColor="#f4e23c" />
        <stop offset="1" stopColor="#43cfa0" />
      </linearGradient>
      <linearGradient id="heatEnd" x1="0" y1="0" x2="1" y2=".4">
        <stop offset="0" stopColor="#4fd65a" />
        <stop offset=".4" stopColor="#2ecbe0" />
        <stop offset="1" stopColor="#2e6fc0" />
      </linearGradient>
      <linearGradient id="disp" gradientUnits="userSpaceOnUse" x1="157" y1="86" x2="1024" y2="684">
        <stop offset="0" stopColor="#0000c8" />
        <stop offset=".12" stopColor="#0008d8" />
        <stop offset=".24" stopColor="#0070d8" />
        <stop offset=".31" stopColor="#00a8d8" />
        <stop offset=".36" stopColor="#00ccc0" />
        <stop offset=".43" stopColor="#00c080" />
        <stop offset=".52" stopColor="#00d000" />
        <stop offset=".62" stopColor="#60d800" />
        <stop offset=".69" stopColor="#d0d000" />
        <stop offset=".8" stopColor="#e07800" />
        <stop offset=".92" stopColor="#d82000" />
        <stop offset="1" stopColor="#d80000" />
      </linearGradient>
      <linearGradient id="teal" x1="0" x2="1" y1=".2" y2="0">
        <stop offset="0" stopColor="#007e80" />
        <stop offset=".5" stopColor="#00b0b0" />
        <stop offset="1" stopColor="#008484" />
      </linearGradient>
    </defs>
    <g fill="url(#teal)">
      <path d="M117 62Q117 50 127 49L133 51L140 66L137 69L122 67Q117 66 117 62z" />
      <path d="M124 50L131 51L140 66L137 69L124 67Q120 58 124 50z" />
      <path d="M137 73Q138 62 147 61L151 63L157 77L150 78L140 76z" />
      <path d="M177 66L185 52Q189 48 195 51Q200 54 200 61L199 65L185 66z" />
      <path d="M162 74L167 62Q172 60 176 62L177 66L165 74z" />
      <path d="M150 93L149 97L157 101L160 98z" />
      <path d="M149 116Q150 108 157 99L160 99Q168 110 168 117V122Q158 127 149 122z" />
    </g>
    <path d={tubePath} stroke="#7f7f7f" strokeWidth="24" />
    <ellipse cx="1024" cy="684" rx="4" ry="12" fill="#7f7f7f" transform="rotate(36 1024 684)" />
    <path d={meshPath} stroke="url(#disp)" strokeWidth="1" shapeRendering="crispEdges" />
    <path d="M156 79l-5 8-1 11" stroke="#f00" strokeDasharray="4 2" />
    <path
      d="M1023 572h5M1019 576l-4 4M1018 581l-2 6M1028 577v5M1030 577v6M1013 590l1 5M1019 592l5-3M1020 595l5-3"
      stroke="#f00"
    />
    <g fill="#fff" stroke="#000" strokeWidth="1">
      <path d="M155.500 77.500l21-11h52v21h-52z" />
      <path d="M1024.500 674.500l19-11h73v21h-73z" />
    </g>
    <g fill="#222" fontFamily="'Liberation Mono', monospace" fontSize="11">
      <text x="174" y="82">Min:0.0</text>
      <text x="1042" y="679">Max:0.3311</text>
    </g>
  </Model>
)

const Triad = () => (
  <Svg s={60} h={60}>
    <path d="M28 38V16" stroke="#00a000" />
    <path d="M28 12l6 11q-6 4-12 0z" fill="#009a00" />
    <path d="M28 38l15 8" stroke="#b00000" />
    <path d="M50 50l-12 1 5-10z" fill="#a00000" />
    <path d="M28 38l-15 8" stroke="#0000b0" />
    <path d="M6 50l7-9 5 1-2 9z" fill="#00009a" />
    <g fontFamily="'Liberation Serif', serif" fontSize="13">
      <text x="24" y="12" fill="#3ef03e">Y</text>
      <text x="0" y="57" fill="#4040ff">Z</text>
      <text x="50" y="57" fill="#ff3838">X</text>
    </g>
  </Svg>
)

const Cube = () => (
  <ViewCube width="90" height="98" viewBox="0 0 90 98" fill="none">
    <defs>
      <radialGradient id="cubeShadow">
        <stop offset=".5" stopColor="#7d8797" stopOpacity=".8" />
        <stop offset="1" stopColor="#7d8797" stopOpacity="0" />
      </radialGradient>
    </defs>
    <ellipse cx="44" cy="64" rx="44" ry="28" fill="url(#cubeShadow)" />
    <g stroke="#8b8f97" strokeLinejoin="round">
      <path d="M7 22L43 6l36 16-36 20z" fill="#ccd1da" />
      <path d="M7 22l36 20v41L12 60z" fill="#c6cbd6" />
      <path d="M79 22L43 42v41l32-23z" fill="#bdc2ce" />
    </g>
    <g fill="#8d929b" fontFamily="'Noto Sans CJK SC', sans-serif" fontSize="21">
      <text transform="matrix(.85 .42 .06 1 15 53)">前</text>
      <text transform="matrix(.85 -.5 -.04 1 51 65)">右</text>
      <text transform="matrix(1 .44 -1 .44 37 23)">上</text>
    </g>
  </ViewCube>
)

/* ---------- small pieces ---------- */

const Combo = ({ label, options, w, pad, kind, icon }) => (
  <SelectBox $w={w} $pad={pad} $kind={kind}>
    <select aria-label={label}>
      {options.map((o) => (
        <option key={o}>{o}</option>
      ))}
    </select>
    {icon}
    {kind === 'view' ? <Chevron /> : <Down w={9} h={6} />}
  </SelectBox>
)

const Command = ({ icon, lines, w, on, arrow }) => (
  <BigButton $w={w} $on={on}>
    <BigIcon name={icon} />
    <BigLabel>
      {lines.map((l) => (
        <span key={l}>{l}</span>
      ))}
      {arrow && <Down w={6} h={4} />}
    </BigLabel>
  </BigButton>
)

const Small = ({ icon, text, disabled }) => (
  <SmallButton disabled={disabled}>
    <SmallIcon name={icon} />
    {text}
  </SmallButton>
)

const Tool = ({ icon, label, arrow }) => (
  <>
    <ToolButton aria-label={label}>
      <Svg s={20}>{qat[icon]}</Svg>
    </ToolButton>
    {arrow && (
      <ToolButton $w={15} aria-label="more">
        <Down w={6} h={4} color="#666" />
      </ToolButton>
    )}
  </>
)

const Title = () => (
  <TitleBar>
    <ToolButton aria-label="Inventor">
      <Svg s={20}>
        <path d="M5 2h10v3l-2 1v8l2 1v3H5v-3l2-1V6L5 5z" fill="#e08a2c" />
        <path d="M9 6h4v8H9z" fill="#b5651a" />
      </Svg>
    </ToolButton>
    <Rule $h={0} style={{ width: 3 }} />
    <Tool icon="file" label="新建" arrow />
    <Tool icon="open" label="打开" />
    <Tool icon="save" label="保存" />
    <Tool icon="undo" label="撤销" arrow />
    <Tool icon="redo" label="重做" arrow />
    <ToolButton aria-label="主页">
      <Home s={20} />
    </ToolButton>
    <Tool icon="bolt" label="更新" arrow />
    <Tool icon="cube" label="选择" arrow />
    <Tool icon="swap" label="替换" />
    <ToolButton aria-label="材料">
      <Checker />
    </ToolButton>
    <Combo label="材料" options={['304']} w={124} />
    <ToolButton aria-label="外观">
      <Wheel />
    </ToolButton>
    <Combo
      label="外观"
      options={['*磨光']}
      w={124}
      pad={26}
      icon={
        <Svg s={27} h={20}>
          <path d="M5 0h17v20H5z" fill="#444" />
          <circle cx="14" cy="9" r="7" fill="#ddd" />
          <path d="M7 10h14q-1 6-7 6t-7-6z" fill="#777" />
          <path d="M11 9l3-4 3 4z" fill="#444" />
          <path d="M6 17h15v2H6z" fill="#999" />
        </Svg>
      }
    />
    <ToolButton aria-label="调整">
      <Wheel mark="add" />
    </ToolButton>
    <ToolButton aria-label="清除">
      <Wheel mark="del" />
    </ToolButton>
    <ToolButton aria-label="参数">
      <Svg s={20}>
        <path d="M10 2q-3-2-4 3L4 15q-1 4-4 3M3 7h6" stroke="#777" strokeWidth="1.800" />
        <path d="M9 8q3-1 5 4t5 3M19 7q-3 1-5 5t-5 4" stroke="#777" strokeWidth="1.800" />
      </Svg>
    </ToolButton>
    <ToolButton aria-label="添加">
      <Svg s={16}>
        <path d="M8 1v14M1 8h14" stroke="#a8a8a8" strokeWidth="4" />
      </Svg>
    </ToolButton>
    <ToolButton $w={20} aria-label="自定义">
      <Svg s={10}>
        <path d="M0 0h10v2H0zM0 4h10l-5 5z" fill="#666" />
      </Svg>
    </ToolButton>
    <TitleText>
      <span>Autodesk Inventor Professional 2022</span>
      <span>10x500x1.5 圆管.ipt</span>
    </TitleText>
    <RightTools>
      <ToolButton $w={20} aria-label="展开">
        <Svg s={6} h={10}>
          <path d="M0 0l6 5-6 5z" fill="#666" />
        </Svg>
      </ToolButton>
      <SearchInput aria-label="搜索" placeholder="搜索帮助和命令..." />
      <LoginButton>
        <Svg s={20}>
          <path d="M10 1q5 0 5 5 0 4-3 6v2q7 1 7 5H1q0-4 7-5v-2q-3-2-3-6 0-5 5-5z" fill="#eef1f6" stroke="#4a4f5c" strokeWidth="1.500" />
        </Svg>
        登录
      </LoginButton>
      <ToolButton $w={8} aria-label="more">
        <Down w={6} h={4} color="#666" />
      </ToolButton>
      <ToolButton $w={44} aria-label="购物车">
        <Svg s={20}>
          <path d="M1 3h3l3 11h10M5 6h14l-2 6H7" stroke="#4b5f8f" strokeWidth="1.600" fill="#d8e0f0" />
          <circle cx="8" cy="17" r="1.800" stroke="#4b5f8f" />
          <circle cx="16" cy="17" r="1.800" stroke="#4b5f8f" />
        </Svg>
      </ToolButton>
      <Rule $h={24} />
      <ToolButton $w={40} aria-label="帮助">
        <Svg s={20}>
          <circle cx="10" cy="10" r="9" fill="#eef2fa" stroke="#5a6478" strokeWidth="1.600" />
          <path d="M7 8q0-3 3-3t3 2.500q0 1.500-1.500 2.500T10 12.500M10 14v2" stroke="#1f4fa8" strokeWidth="2.200" />
        </Svg>
      </ToolButton>
      <ToolButton $w={8} aria-label="more">
        <Down w={6} h={4} color="#666" />
      </ToolButton>
      <WindowButtons>
        <ToolButton $w={28} aria-label="最小化">
          <Svg s={10} h={16}>
            <path d="M0 12h10v3H0z" fill="#3c3c3c" />
          </Svg>
        </ToolButton>
        <ToolButton aria-label="还原">
          <Svg s={16}>
            <path d="M5 5V1h10v8h-4" stroke="#3c3c3c" strokeWidth="1.600" />
            <path d="M1 6h10v8H1z" stroke="#3c3c3c" strokeWidth="1.600" />
            <path d="M1 6h10v2H1zM5 1h10v2H5z" fill="#3c3c3c" />
          </Svg>
        </ToolButton>
        <ToolButton aria-label="关闭">
          <Cross s={14} color="#3c3c3c" w={1.5} />
        </ToolButton>
      </WindowButtons>
    </RightTools>
  </TitleBar>
)

const RibbonBar = () => (
  <Ribbon>
    <RibbonGroup $w={53}>
      <Command icon="settings" lines={['默认', '设置']} w={50} />
    </RibbonGroup>
    <RibbonGroup $w={167}>
      <Command icon="create" lines={['新建']} w={48} />
      <Command icon="edit" lines={['编辑']} w={46} />
      <Command icon="stress" lines={['从应力', '分析输入']} w={71} />
    </RibbonGroup>
    <RibbonGroup $w={291} $pad={1}>
      <Command icon="sigma" lines={['材料']} w={48} />
      <Command icon="ideal" lines={['理想化']} w={52} />
      <Command icon="link" lines={['连接器']} w={50} />
      <Command icon="offset" lines={['偏移曲面']} w={92} arrow />
      <Command icon="member" lines={['结构', '构件']} w={40} />
    </RibbonGroup>
    <RibbonGroup $w={53}>
      <Command icon="run" lines={['运行']} w={50} />
    </RibbonGroup>
    <RibbonGroup $w={606} $pad={1}>
      <Command icon="load" lines={['加载结果']} w={68} />
      <Command icon="contour" lines={['轮廓']} w={46} on />
      <Command icon="deform" lines={['形变']} w={46} on />
      <Command icon="back" lines={['返回']} w={46} />
      <Command icon="linear" lines={['应力线性化']} w={85} />
      <SelectColumn>
        <Combo label="子工况" options={['子工况 1']} w={211} pad={8} kind="ribbon" />
        <SmallRow>
          <Small icon="prev" text="上一个" disabled />
          <Small icon="next" text="下一个" disabled />
        </SmallRow>
        <SmallRow>
          <Small icon="option" text="选项" />
          <Small icon="film" text="动画制作" />
        </SmallRow>
        <MoreButton $pad={5} aria-label="更多">
          <Down w={9} h={5} />
        </MoreButton>
      </SelectColumn>
      <Column>
        <Small icon="probe" text="探测" />
        <Small icon="unprobe" text="删除探测" disabled />
        <Small icon="converge" text="收敛图" />
      </Column>
    </RibbonGroup>
    <RibbonGroup $w={103}>
      <Command icon="visible" lines={['对象可见性']} w={100} arrow />
    </RibbonGroup>
    <RibbonGroup $w={198} $pad={1}>
      <Command icon="help" lines={['帮助']} w={47} />
      <Command icon="tutor" lines={['教程']} w={47} />
      <Column>
        <Small icon="about" text="关于" />
        <Small icon="readme" text="自述文件" />
        <Small icon="forum" text="论坛" />
        <MoreButton aria-label="更多">
          <Down w={9} h={5} />
        </MoreButton>
      </Column>
    </RibbonGroup>
    <RibbonGroup $pad={4}>
      <Command icon="finish" lines={['完成', 'Autodesk Inventor Nastran']} w={198} />
    </RibbonGroup>
  </Ribbon>
)

const ModelBrowser = () => {
  const [selected, setSelected] = useState('位移')

  return (
    <Browser>
      <BrowserTabs>
        <BrowserTab $w={27}>模..</BrowserTab>
        <BrowserTab $w={44} $on aria-label="Nastran">
          <Svg s={14} h={10}>
            <path d="M0 0h9v3h5v4H9v3H0V7h3V3H0z" fill="#555" />
          </Svg>
          <Cross />
        </BrowserTab>
        <BrowserTab $w={30}>. . .</BrowserTab>
        <BrowserTab $w={26}>. . .</BrowserTab>
        <BrowserTab $w={24} aria-label="添加">
          <Svg s={12}>
            <path d="M6 1v10M1 6h10" stroke="#666" strokeWidth="2" />
          </Svg>
        </BrowserTab>
        <BrowserTab $w={28} aria-label="菜单">
          <Menu />
        </BrowserTab>
      </BrowserTabs>
      <Tree>
        {treeRows.map((row, i) => (
          <TreeRow key={i} onClick={() => setSelected(row.text)}>
            {row.g.split('').map((c, j) => (
              <Guide key={j} $own={branch[c]} $line={c === '|'}>
                {branch[c] && row.open !== undefined && (
                  <Expander aria-label={row.text}>
                    <Svg s={5}>
                      <path
                        d={row.open ? 'M0 2.500h5' : 'M0 2.500h5M2.500 0v5'}
                        stroke="#2b4a9b"
                      />
                    </Svg>
                  </Expander>
                )}
              </Guide>
            ))}
            <TreeIcon>
              <Svg s={16}>{treeIcons[row.icon]}</Svg>
            </TreeIcon>
            <TreeLabel $selected={selected === row.text}>{row.text}</TreeLabel>
            {row.kind && <Kind>{row.kind}</Kind>}
            {row.swatch && <Swatch />}
            {row.warn && <Warning />}
          </TreeRow>
        ))}
      </Tree>
      <ScrollBar>
        <button aria-label="左">
          <Svg s={7} h={10}>
            <path d="M6 1L2 5l4 4" stroke="#444" strokeWidth="2" />
          </Svg>
        </button>
        <ScrollThumb />
        <button aria-label="右">
          <Svg s={7} h={10}>
            <path d="M1 1l4 4-4 4" stroke="#444" strokeWidth="2" />
          </Svg>
        </button>
      </ScrollBar>
    </Browser>
  )
}

const Navigation = () => (
  <NavBar>
    <NavEnd $h={14} aria-label="关闭">
      <Svg s={9}>
        <circle cx="4.500" cy="4.500" r="4.500" fill="#8a94a3" />
        <path d="M2.500 2.500l4 4M6.500 2.500l-4 4" stroke="#fff" />
      </Svg>
    </NavEnd>
    <NavButton $h={34} aria-label="控制盘">
      <NavIcon name="wheel" />
    </NavButton>
    <NavArrow h={10} />
    <NavRule />
    <NavButton $h={36} aria-label="平移">
      <NavIcon name="hand" />
    </NavButton>
    <NavButton $h={28} aria-label="缩放">
      <NavIcon name="zoom" />
    </NavButton>
    <NavArrow h={14} />
    <NavButton $h={28} aria-label="动态观察">
      <NavIcon name="orbit" />
    </NavButton>
    <NavArrow h={14} />
    <NavButton $h={28} aria-label="观察方向">
      <NavIcon name="look" />
    </NavButton>
    {['box', 'ball', 'sun', 'floor'].map((n) => (
      <React.Fragment key={n}>
        <NavButton $h={26} aria-label={n}>
          <NavIcon name={n} />
        </NavButton>
        <NavArrow h={8} />
      </React.Fragment>
    ))}
    <NavEnd $h={20} aria-label="选项">
      <Svg s={9}>
        <circle cx="4.500" cy="4.500" r="4" stroke="#8a94a3" />
        <path d="M2.500 3.500h4M3 5h3l-1.500 2z" stroke="#8a94a3" fill="#8a94a3" strokeWidth=".8" />
      </Svg>
    </NavEnd>
  </NavBar>
)

const View = () => (
  <Viewport>
    <Scene />
    <ViewBar>
      <Combo label="结果" options={['Displacement']} w={125} pad={7} kind="view" />
      <Combo label="分量" options={['TOTAL']} w={82} pad={6} kind="view" />
      <Combo label="单位" options={['mm']} w={63} pad={7} kind="view" />
      <GearButton aria-label="设置">
        <Svg s={18}>
          <circle cx="7" cy="11" r="4" stroke="#444" strokeWidth="2.500" />
          <circle cx="7" cy="11" r="5.500" stroke="#444" strokeDasharray="2 2.300" strokeWidth="2" />
          <circle cx="14" cy="4" r="2" stroke="#444" strokeWidth="1.500" />
          <circle cx="14" cy="4" r="3" stroke="#444" strokeDasharray="1 1.300" />
        </Svg>
      </GearButton>
    </ViewBar>
    <ViewWindowButtons>
      <ToolButton $w={16} aria-label="最小化">
        <Svg s={8}>
          <path d="M0 5h8v2H0z" fill="#555" />
        </Svg>
      </ToolButton>
      <ToolButton $w={24} aria-label="平铺">
        <Svg s={12} h={11}>
          <path d="M.5 1h11v9.500H.5zM6.500 1v9M7 5.500h5" stroke="#444" />
          <path d="M0 0h12v2H0z" fill="#444" />
        </Svg>
      </ToolButton>
      <ToolButton $w={16} aria-label="关闭">
        <Cross color="#444" w={1.8} />
      </ToolButton>
    </ViewWindowButtons>
    <Legend>
      <LegendBar>
        {legend.slice(1).map((v) => (
          <LegendStep key={v} />
        ))}
      </LegendBar>
      <LegendLabels>
        {legend.map((v) => (
          <span key={v}>{v}</span>
        ))}
      </LegendLabels>
    </Legend>
    <Footer>
      <Triad />
      <Notes>
        <p>
          轮廓<code>: DISPLACEMENT (mm) (</code>总计<code>)</code>
        </p>
        <p>
          形变<code> </code>总计<code>: (MIN=0, MAX=0.331136)</code>
        </p>
        <p>
          输出集<code>: </code>子工况<code> 1</code>
        </p>
      </Notes>
    </Footer>
    <Cube />
    <Navigation />
    <Gravity>
      G
      <Svg s={26} h={26}>
        <path d="M5 0q8 2 16 0v17h5l-13 9-13-9h5z" fill="#32329b" />
      </Svg>
    </Gravity>
  </Viewport>
)

const WindowsBar = () => (
  <TaskBar>
    <TaskIcon aria-label="开始">
      <Svg s={17} h={18}>
        <path d="M0 3l7-1v7H0zM8 2l9-2v9H8zM0 10h7v7l-7-1zM8 10h9v8l-9-1z" fill="#000" />
      </Svg>
    </TaskIcon>
    <TaskIcon aria-label="搜索">
      <Svg s={20}>
        <circle cx="13" cy="7" r="6" stroke="#000" strokeWidth="1.500" />
        <path d="M9 12l-8 8" stroke="#000" strokeWidth="1.500" />
      </Svg>
    </TaskIcon>
    <TaskIcon aria-label="Cortana">
      <Svg s={20}>
        <circle cx="10" cy="10" r="8.500" stroke="#000" strokeWidth="2.800" />
      </Svg>
    </TaskIcon>
    <TaskIcon $w={66} aria-label="Edge">
      <Svg s={30}>
        <defs>
          <linearGradient id="edgeTop">
            <stop offset="0" stopColor="#1b9de2" />
            <stop offset=".5" stopColor="#2cc3d5" />
            <stop offset="1" stopColor="#6ae04e" />
          </linearGradient>
        </defs>
        <path d="M0 15Q1 0 15 0q14 1 15 12 0 8-8 8-5 0-5-2 3-4 0-7Q9 5 0 15z" fill="url(#edgeTop)" />
        <path d="M0 15q4-7 10-6 6 0 8 4-6-1-7 5 1 8 10 8 4 0 7-2-4 6-13 6Q0 29 0 15z" fill="#1476cc" />
        <path d="M11 14q-2 11 9 12 5 0 8-2-4 6-12 6-6-1-8-7 0-5 3-9z" fill="#0b4f9f" />
      </Svg>
    </TaskIcon>
    <TaskIcon $w={54} aria-label="微信">
      <WeChat />
    </TaskIcon>
    <TaskWindow $on>
      <Svg s={29}>
        <path d="M0 0h29v29H0z" fill="#fbdcc0" />
        <path d="M9 2h11v4l-3 1v11l3 1v3H9v-3l3-1V7L9 6z" fill="#d9822b" />
        <path d="M14 6h3v13h-3z" fill="#a85c17" />
        <path d="M16 24h10M16 26.500h10" stroke="#f08a2c" strokeWidth="1.500" strokeDasharray="3 1" />
      </Svg>
      Autodesk Invento...
    </TaskWindow>
    <TaskWindow>
      <Svg s={20} h={28}>
        <path d="M2 1h14v23H2z" fill="#f4cf6a" />
        <path d="M1 1l6 6v20l-6-4z" fill="#ffe49a" />
        <path d="M16 17h2v7h-4z" fill="#f4cf6a" />
      </Svg>
      屏幕截图
    </TaskWindow>
    <Tray>
      <TrayButton aria-label="显示隐藏的图标">
        <Svg s={12} h={8}>
          <path d="M1 7l5-5 5 5" stroke="#000" strokeWidth="1.500" />
        </Svg>
      </TrayButton>
      <TrayButton aria-label="微信">
        <WeChat s={20} />
      </TrayButton>
      <TrayButton aria-label="安全">
        <Svg s={20}>
          <rect width="20" height="20" rx="3" fill="#1f7fd6" />
          <path d="M10 2l7 2q0 10-7 13Q3 14 3 4z" fill="#cfe4f5" stroke="#5a8db8" />
          <path d="M10 2q0 8 0 15Q3 14 3 4z" fill="#8fbde0" />
          <path d="M9 13l3 3 7-8" stroke="#f4e21c" strokeWidth="2.500" />
        </Svg>
      </TrayButton>
      <TrayButton aria-label="钉钉">
        <Svg s={18}>
          <rect width="18" height="18" rx="4" fill="#1187fb" />
          <path d="M5 3q8 3 9 7l-3 3-2 3v-4q-3-2-4-9z" fill="#fff" />
        </Svg>
      </TrayButton>
      <TrayButton aria-label="电池">
        <Svg s={20} h={14}>
          <path d="M5 4h13v9H5zM18 6.500h1.500v4H18" stroke="#000" />
          <path d="M7 6h10v6H7z" fill="#000" />
          <path d="M1 1h4v4H1zM3 5v6h3M2 0v2M4 0v2" stroke="#000" />
        </Svg>
      </TrayButton>
      <TrayButton aria-label="音量">
        <Svg s={21} h={18}>
          <path d="M1 6h3l4-4v14l-4-4H1z" stroke="#000" />
          <path d="M11 6q2 3 0 6" stroke="#000" />
          <path d="M14 4q3 5 0 10M17 2q4 7 0 14" stroke="#999" />
        </Svg>
      </TrayButton>
      <TrayButton $ime>中</TrayButton>
      <Clock>
        8:11
        <br />
        2022/10/31
      </Clock>
      <NoticeButton aria-label="通知">
        <Svg s={20}>
          <path d="M0 0h20v16h-8v4l-4-4H0z" fill="#000" />
          <path d="M4 4h12M4 8h12M4 12h8" stroke="#eee" strokeWidth="1.500" />
        </Svg>
        <NoticeCount>1</NoticeCount>
      </NoticeButton>
      <Rule $h={50} />
    </Tray>
  </TaskBar>
)

const App = () => {
  return (
    <Window>
      <GlobalStyle />
      <Title />
      <RibbonTabs>
        <RibbonTab $file>文件</RibbonTab>
        {menuTabs.map((t) => (
          <RibbonTab key={t}>{t}</RibbonTab>
        ))}
        <RibbonTab $active>Autodesk Inventor Nastran</RibbonTab>
        <PanelToggle aria-label="最小化功能区">
          <Svg s={19} h={12}>
            <rect x="1" y="1" width="17" height="10" rx="3" fill="#f5f5f5" stroke="#555" strokeWidth="1.500" />
            <path d="M6 8h7L9.500 4z" fill="#333" />
          </Svg>
          <Down w={6} h={4} color="#000" />
        </PanelToggle>
      </RibbonTabs>
      <RibbonBar />
      <Main>
        <ModelBrowser />
        <Documents>
          <View />
          <DocTabs>
            <DocTab $home aria-label="主页">
              <Home s={20} />
            </DocTab>
            <DocTab>10x500 圆棒.ipt</DocTab>
            <DocTab $on>
              10x500x1.5 圆管.ipt
              <Cross />
            </DocTab>
            <DocMenu aria-label="文档">
              <Menu w={18} gap={6} />
            </DocMenu>
          </DocTabs>
        </Documents>
      </Main>
      <StatusBar>
        <span>就绪</span>
        <StatusCell $w={40}>1</StatusCell>
        <StatusCell $w={38}>2</StatusCell>
      </StatusBar>
      <WindowsBar />
    </Window>
  )
}

export default App
